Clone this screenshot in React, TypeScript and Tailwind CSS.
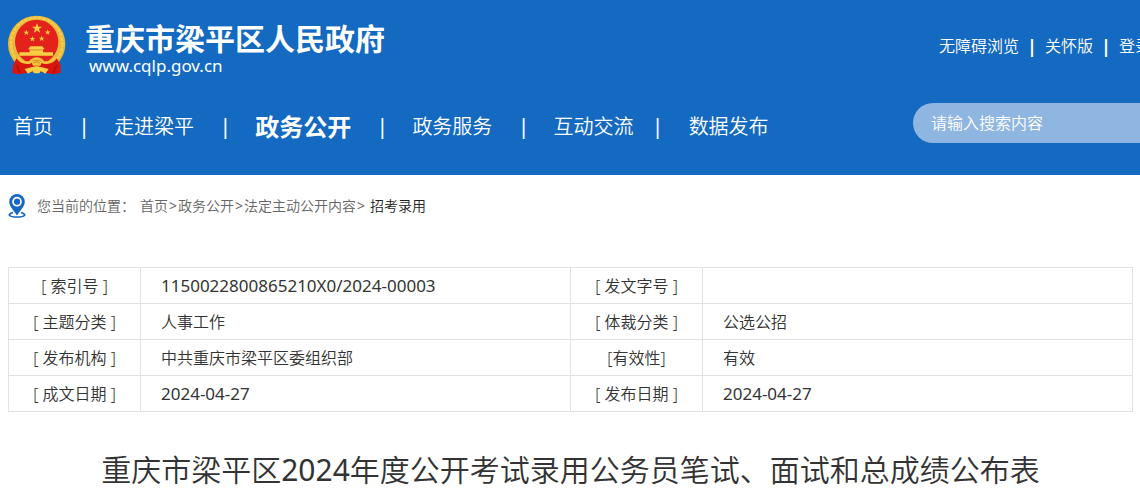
import React from "react";

const navItems = [
  { label: "首页" },
  { label: "走进梁平" },
  { label: "政务公开", active: true },
  { label: "政务服务" },
  { label: "互动交流" },
  { label: "数据发布", tight: true },
];

const topLinks = ["无障碍浏览", "关怀版", "登录"];

const crumbs = ["首页", "政务公开", "法定主动公开内容"];

const rows = [
  ["[ 索引号 ]", "1150022800865210X0/2024-00003", "[ 发文字号 ]", ""],
  ["[ 主题分类 ]", "人事工作", "[ 体裁分类 ]", "公选公招"],
  ["[ 发布机构 ]", "中共重庆市梁平区委组织部", "[有效性]", "有效"],
  ["[ 成文日期 ]", "2024-04-27", "[ 发布日期 ]", "2024-04-27"],
];

const star = "M0 -10L2.3 -3.1L9.5 -3.1L3.7 1.2L5.9 8.1L0 3.9L-5.9 8.1L-3.7 1.2L-9.5 -3.1L-2.3 -3.1Z";

const Emblem = () => (
  <svg className="h-[60px] w-[59px] shrink-0" viewBox="21 21 177 180" aria-hidden="true">
    <path d="M48 150L37 194L58 199L110 190L160 199L182 194L172 150Z" fill="#d9150f" />
    <ellipse cx="110" cy="108" rx="86" ry="85" fill="#e9b93a" />
    <ellipse cx="110" cy="106" rx="77" ry="77" fill="none" stroke="#f5cd4e" strokeWidth="7" strokeDasharray="11 3" />
    <ellipse cx="110" cy="102" rx="65" ry="67" fill="#e3231b" />
    <g fill="#f6cf45">
      <path d={star} transform="translate(111 61) scale(1.6)" />
      <path d={star} transform="translate(79 74) scale(.9)" />
      <path d={star} transform="translate(143 73) scale(.9)" />
      <path d={star} transform="translate(97 93) scale(.9)" />
      <path d={star} transform="translate(125 92) scale(.9)" />
      <path d="M84 124L91 115H127L134 124Z" />
      <path d="M89 124H129V133H159V143H58V133H89Z" />
    </g>
    <path d="M88 126H130" stroke="#d18d1c" strokeWidth="2" />
    <path d="M50 150Q64 164 88 163L110 153L133 163Q157 164 170 150L182 172L181 194L160 199Q145 180 110 194Q75 180 58 199L37 194L39 172Z" fill="#d9150f" />
    <path d="M52 148Q66 168 90 163Q98 152 110 152Q122 152 130 163Q154 168 168 148" fill="none" stroke="#f3c33c" strokeWidth="8" />
    <path d="M94 163Q110 150 126 163L121 173H99Z" fill="#f3c33c" />
    <path d="M101 165Q110 157 119 165" fill="none" stroke="#cf8518" strokeWidth="3" />
    <path d="M74 183L94 178L110 174L126 178L146 183L136 197L122 188L118 196H102L98 188L84 197Z" fill="#f6cf45" />
    <path d="M50 172L60 194M170 172L160 194" stroke="#a90d0b" strokeWidth="4" />
  </svg>
);

const PinIcon = () => (
  <svg className="h-6 w-[18px] shrink-0" viewBox="0 0 18 24" aria-hidden="true">
    <path d="M5 18.5C-1.5 20.5 1 23 9 23S19.5 20.5 13 18.5" fill="none" stroke="#1569c1" strokeWidth="1.6" />
    <path d="M9 0A7.8 7.8 0 0 0 1.2 7.8C1.2 12.5 5.5 16 9 21.5C12.5 16 16.8 12.5 16.8 7.8A7.8 7.8 0 0 0 9 0Z" fill="#1569c1" />
    <circle cx="9" cy="7.7" r="4" fill="none" stroke="#fff" strokeWidth="1.7" />
  </svg>
);

const Header = () => (
  <header className="grid h-[175px] grid-cols-[1fr_227px] overflow-hidden bg-[#1469c1] text-white">
    <div>
      <div className="flex pt-[15px] pl-[7px]">
        <Emblem />
        <div className="pt-1.5 pl-[19px]">
          <div className="text-[30px] leading-9 font-bold whitespace-nowrap">重庆市梁平区人民政府</div>
          <div className="pl-1 text-[17px] leading-[18px] font-normal">www.cqlp.gov.cn</div>
        </div>
      </div>
      <nav className="mt-8 flex h-10 items-center pl-[13px] text-xl font-[350] whitespace-nowrap">
        {navItems.map((item, i) => (
          <React.Fragment key={item.label}>
            {i > 0 && (
              <span
                className={
                  item.tight
                    ? "pr-[25px] pb-1 pl-[18px] text-[22px] font-normal"
                    : "pr-6 pb-1 pl-[25px] text-[22px] font-normal"
                }
              >
                |
              </span>
            )}
            <a href="#" className={item.active ? "text-2xl font-bold" : ""}>
              {item.label}
            </a>
          </React.Fragment>
        ))}
      </nav>
    </div>
    <div>
      <div className="mt-[34px] flex h-6 items-center pl-[26px] text-base font-[350] whitespace-nowrap">
        {topLinks.map((link, i) => (
          <React.Fragment key={link}>
            {i > 0 && <span className="px-2 text-lg leading-6 font-bold">|</span>}
            <a href="#">{link}</a>
          </React.Fragment>
        ))}
      </div>
      <input
        type="text"
        aria-label="请输入搜索内容"
        placeholder="请输入搜索内容"
        className="mt-[45px] h-10 w-full rounded-l-full bg-[#8fb6e1] pl-[18px] text-base font-[350] outline-none placeholder:text-white"
      />
    </div>
  </header>
);

const App = () => {
  return (
    <div className="min-h-screen bg-white font-['Noto_Sans','Noto_Sans_CJK_SC',sans-serif] font-[350] text-[#333]">
      <Header />
      <main className="pr-[7px] pl-2">
        <div className="flex h-[62px] items-center text-sm text-[#666]">
          <PinIcon />
          <span className="pl-[11px]">您当前的位置：</span>
          <span className="pl-[5px]">
            {crumbs.map((crumb) => (
              <React.Fragment key={crumb}>
                <a href="#">{crumb}</a>
                <span className="px-px font-normal">&gt;</span>
              </React.Fragment>
            ))}
          </span>
          <a href="#" className="pl-1 text-[#222]">招考录用</a>
        </div>
        <table className="mt-[30px] w-full table-fixed border-collapse text-base">
          <colgroup>
            <col className="w-[132px]" />
            <col />
            <col className="w-[132px]" />
            <col />
          </colgroup>
          <tbody>
            {rows.map((row) => (
              <tr key={row[0]} className="h-9">
                {row.map((cell, i) =>
                  i % 2 === 0 ? (
                    <th key={i} scope="row" className="border border-[#e2e2e2] text-center font-[350]">
                      {cell}
                    </th>
                  ) : (
                    <td
                      key={i}
                      className={
                        /^\d/.test(cell)
                          ? "border border-[#e2e2e2] pl-5 text-[17px] leading-6 font-normal"
                          : "border border-[#e2e2e2] pl-5"
                      }
                    >
                      {cell}
                    </td>
                  )
                )}
              </tr>
            ))}
          </tbody>
        </table>
        <h1 className="mt-9 text-center text-[30px] leading-[44px] font-[350]">
          重庆市梁平区<span className="font-normal">2024</span>年度公开考试录用公务员笔试、面试和总成绩公布表
        </h1>
      </main>
    </div>
  );
};

export default App;
